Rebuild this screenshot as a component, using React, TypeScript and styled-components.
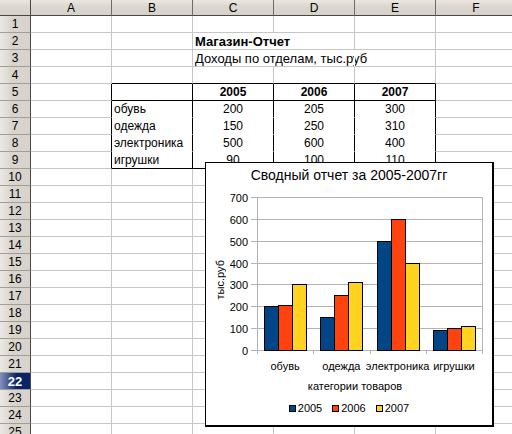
import React from 'react';
import styled, { createGlobalStyle } from 'styled-components';

type Line = 'grid' | 'black' | 'none';
type Align = 'left' | 'center';

interface CellData {
    text?: string;
    align?: Align;
    bold?: boolean;
    large?: boolean;
}

const GlobalStyle = createGlobalStyle`
    html, body {
        margin: 0;
        padding: 0;
        background: #fff;
        overflow: hidden;
    }
    body {
        font-family: "Liberation Sans", Arial, sans-serif;
    }
`;

const Sheet = styled.div`
    position: relative;
    display: grid;
    grid-template-columns: 31px repeat(6, 81px);
    grid-template-rows: 16px;
    grid-auto-rows: 17px;
    width: 512px;
    height: 434px;
    overflow: hidden;
    font-size: 12px;
    color: #000;
`;

const headerBg = 'linear-gradient(#ebe8e3, #dcd8d1 40%, #d6d2ca)';

const Corner = styled.div`
    box-sizing: border-box;
    background: ${headerBg};
    border-right: 1px solid #4a4743;
    border-bottom: 1px solid #4a4743;
`;

const ColHeader = styled.div`
    box-sizing: border-box;
    display: flex;
    align-items: center;
    justify-content: center;
    background: ${headerBg};
    border-right: 1px solid #6f6b66;
    border-bottom: 1px solid #4a4743;
`;

const RowHeader = styled.div<{ $selected?: boolean }>`
    box-sizing: border-box;
    display: flex;
    align-items: center;
    justify-content: center;
    background: ${(p) => (p.$selected ? 'linear-gradient(to right, #8592bd, #0a246a 55%)' : 'linear-gradient(to right, #ece9e4, #d8d4cd 40%)')};
    color: ${(p) => (p.$selected ? '#fff' : '#000')};
    font-weight: ${(p) => (p.$selected ? 'bold' : 'normal')};
    font-size: ${(p) => (p.$selected ? '13px' : '12px')};
    border-right: 1px solid #4a4743;
    border-bottom: 1px solid #a19d97;
`;

const lineColor = (l: Line) => (l === 'black' ? '#000' : l === 'none' ? '#fff' : '#c6c6c6');

const Cell = styled.div<{ $right: Line; $bottom: Line; $align: Align; $bold?: boolean; $large?: boolean }>`
    box-sizing: border-box;
    display: flex;
    align-items: center;
    justify-content: ${(p) => (p.$align === 'center' ? 'center' : 'flex-start')};
    padding: 0 2px;
    white-space: nowrap;
    overflow: visible;
    font-size: ${(p) => (p.$large ? '13px' : '12px')};
    font-weight: ${(p) => (p.$bold ? 'bold' : 'normal')};
    border-right: 1px solid ${(p) => lineColor(p.$right)};
    border-bottom: 1px solid ${(p) => lineColor(p.$bottom)};
`;

const ChartFrame = styled.div`
    position: absolute;
    left: 205px;
    top: 162px;
    width: 289px;
    height: 265px;
    box-sizing: border-box;
    border: solid #000;
    border-width: 1px 2px 2px 1px;
    background: #fff;
    display: flex;
    flex-direction: column;
    font-size: 11px;
    z-index: 1;
`;

const ChartTitle = styled.div`
    height: 25px;
    line-height: 25px;
    text-align: center;
    font-size: 14px;
`;

const ChartBody = styled.div`
    display: flex;
    height: 190px;

    svg {
        flex-shrink: 0;
    }
`;

const AxisTitle = styled.div`
    flex: 0 0 20px;
    box-sizing: border-box;
    display: flex;
    align-items: center;
    justify-content: flex-start;
    padding: 0 0 6px 9px;

    span {
        writing-mode: vertical-rl;
        transform: rotate(180deg);
        line-height: 11px;
    }
`;

const XTitle = styled.div`
    height: 16px;
    line-height: 16px;
    padding-left: 12px;
    text-align: center;
`;

const Legend = styled.div`
    display: flex;
    justify-content: center;
    align-items: center;
    gap: 10px;
    margin-top: 6px;
    height: 16px;
`;

const LegendItem = styled.div`
    display: flex;
    align-items: center;
    gap: 2px;
`;

const Swatch = styled.span<{ $color: string }>`
    width: 7px;
    height: 7px;
    box-sizing: border-box;
    border: 1px solid #000;
    background: ${(p) => p.$color};
`;

const columns = ['A', 'B', 'C', 'D', 'E', 'F'];
const series = [
    { year: '2005', color: '#004586' },
    { year: '2006', color: '#ff420e' },
    { year: '2007', color: '#ffd320' },
];
const categories = [
    { name: 'обувь', values: [200, 205, 300] },
    { name: 'одежда', values: [150, 250, 310] },
    { name: 'электроника', values: [500, 600, 400] },
    { name: 'игрушки', values: [90, 100, 110] },
];

const cellData: Record<number, CellData[]> = {
    2: [{}, {}, { text: 'Магазин-Отчет', bold: true, large: true }],
    3: [{}, {}, { text: 'Доходы по отделам, тыс.руб', large: true }],
    5: [{}, {}, ...series.map((s) => ({ text: s.year, bold: true, align: 'center' as Align }))],
};
categories.forEach((c, i) => {
    cellData[6 + i] = [{}, { text: c.name }, ...c.values.map((v) => ({ text: String(v), align: 'center' as Align }))];
});

const inTable = (row: number, col: number) => row >= 5 && row <= 9 && col >= 1 && col <= 4;

const rightLine = (row: number, col: number): Line => {
    if (row >= 5 && row <= 9 && col <= 4) return 'black';
    if (row === 2 && col === 2) return 'none';
    if (row === 3 && (col === 2 || col === 3)) return 'none';
    return 'grid';
};

const bottomLine = (row: number, col: number): Line => {
    if (col >= 1 && col <= 4 && (row === 4 || row === 5 || row === 9)) return 'black';
    if (inTable(row, col)) return 'none';
    return 'grid';
};

// plot area inside the chart svg
const PLOT = { left: 31, right: 256, top: 9, bottom: 162 };
const MAX = 700;
const scaleY = (v: number) => PLOT.bottom - (v * (PLOT.bottom - PLOT.top)) / MAX;
const catWidth = (PLOT.right - PLOT.left) / categories.length;
const BAR = 14;

const ChartPlot: React.FC = () => (
    <svg width={266} height={190} style={{ fontFamily: '"Liberation Sans", Arial, sans-serif', fontSize: 11 }}>
        {[0, 100, 200, 300, 400, 500, 600, 700].map((v) => {
            const y = Math.round(scaleY(v)) + 0.5;
            return (
                <g key={v}>
                    <line x1={PLOT.left - 6} x2={PLOT.right} y1={y} y2={y} stroke="#b3b3b3" />
                    <text x={PLOT.left - 9} y={y + 4} textAnchor="end">
                        {v}
                    </text>
                </g>
            );
        })}
        <line x1={PLOT.left + 0.5} x2={PLOT.left + 0.5} y1={PLOT.top} y2={PLOT.bottom + 4} stroke="#b3b3b3" />
        <line x1={PLOT.right + 0.5} x2={PLOT.right + 0.5} y1={PLOT.top} y2={PLOT.bottom + 4} stroke="#b3b3b3" />
        {categories.map((c, i) => {
            const x0 = PLOT.left + i * catWidth;
            const start = Math.round(x0 + (catWidth - BAR * 3) / 2);
            return (
                <g key={c.name}>
                    {i > 0 && (
                        <line x1={Math.round(x0) + 0.5} x2={Math.round(x0) + 0.5} y1={PLOT.bottom} y2={PLOT.bottom + 4} stroke="#b3b3b3" />
                    )}
                    {c.values.map((v, j) => {
                        const y = Math.round(scaleY(v));
                        return (
                            <rect
                                key={j}
                                x={start + j * BAR + 0.5}
                                y={y + 0.5}
                                width={BAR}
                                height={PLOT.bottom - y}
                                fill={series[j].color}
                                stroke="#000"
                            />
                        );
                    })}
                    <text x={x0 + catWidth / 2} y={182} textAnchor="middle">
                        {c.name}
                    </text>
                </g>
            );
        })}
    </svg>
);

const App: React.FC = () => {
    const rows = Array.from({ length: 25 }, (_, i) => i + 1);

    return (
        <>
            <GlobalStyle />
            <Sheet>
                <Corner />
                {columns.map((c) => (
                    <ColHeader key={c}>{c}</ColHeader>
                ))}
                {rows.map((row) => (
                    <React.Fragment key={row}>
                        <RowHeader $selected={row === 22}>{row}</RowHeader>
                        {columns.map((_, col) => {
                            const data = cellData[row]?.[col] ?? {};
                            return (
                                <Cell
                                    key={col}
                                    $right={rightLine(row, col)}
                                    $bottom={bottomLine(row, col)}
                                    $align={data.align ?? 'left'}
                                    $bold={data.bold}
                                    $large={data.large}
                                >
                                    {data.text}
                                </Cell>
                            );
                        })}
                    </React.Fragment>
                ))}

                <ChartFrame>
                    <ChartTitle>Сводный отчет за 2005-2007гг</ChartTitle>
                    <ChartBody>
                        <AxisTitle>
                            <span>тыс.руб</span>
                        </AxisTitle>
                        <ChartPlot />
                    </ChartBody>
                    <XTitle>категории товаров</XTitle>
                    <Legend>
                        {series.map((s) => (
                            <LegendItem key={s.year}>
                                <Swatch $color={s.color} />
                                {s.year}
                            </LegendItem>
                        ))}
                    </Legend>
                </ChartFrame>
            </Sheet>
        </>
    );
};

export default App;
